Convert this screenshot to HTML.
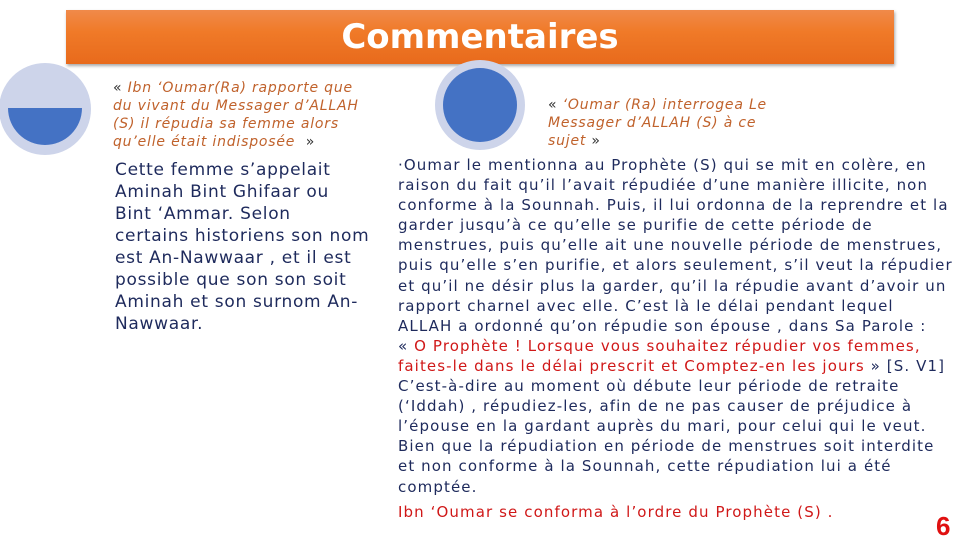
<!DOCTYPE html>
<html><head><meta charset="utf-8"><style>
body{margin:0;width:960px;height:540px;background:#fff;position:relative;overflow:hidden;font-family:"DejaVu Sans","Liberation Sans",sans-serif;}
.ban{position:absolute;left:66px;top:10px;width:828px;height:54px;background:linear-gradient(#f08a4a,#f07a28 40%,#e86a1c);box-shadow:1px 2px 3px rgba(0,0,0,.35);}
.ban div{position:absolute;left:0;right:0;top:7px;text-align:center;color:#fff;font:bold 34px "DejaVu Sans",sans-serif;}
.q{position:absolute;color:#c0622c;font-style:italic;font-size:14px;letter-spacing:0.8px;line-height:18px;white-space:nowrap}
.q b{font-style:normal;color:#333;font-weight:normal}
.t{position:absolute;color:#1e2a5c;white-space:nowrap}
.r{color:#d01818}
</style></head><body>
<div class="ban"><div>Commentaires</div></div>
<svg style="position:absolute;left:0;top:0" width="960" height="200">
<circle cx="45" cy="109" r="46" fill="#cdd4ea"/>
<path d="M8 108 A37 37 0 0 0 82 108 Z" fill="#4472c4"/>
<circle cx="480" cy="105" r="45" fill="#cdd4ea"/>
<circle cx="480" cy="105" r="37" fill="#4472c4"/>
</svg>
<div class="q" style="left:113px;top:79px"><b>«</b> Ibn ‘Oumar(Ra) rapporte que<br>du vivant du Messager d’ALLAH<br>(S) il répudia sa femme alors<br>qu’elle était indisposée &nbsp;<b>»</b></div>
<div class="q" style="left:548px;top:96px"><b>«</b> ‘Oumar (Ra) interrogea Le<br>Messager d’ALLAH (S) à ce<br>sujet <b>»</b></div>
<div class="t" style="left:115px;top:159px;font-size:17px;letter-spacing:0.7px;line-height:22px">Cette femme s’appelait<br>Aminah Bint Ghifaar ou<br>Bint ‘Ammar. Selon<br>certains historiens son nom<br>est An-Nawwaar , et il est<br>possible que son son soit<br>Aminah et son surnom An-<br>Nawwaar.</div>
<div class="t" style="left:398px;top:155px;font-size:15px;letter-spacing:1.1px;line-height:20.1px">·Oumar le mentionna au Prophète (S) qui se mit en colère, en<br>raison du fait qu’il l’avait répudiée d’une manière illicite, non<br>conforme à la Sounnah. Puis, il lui ordonna de la reprendre et la<br>garder jusqu’à ce qu’elle se purifie de cette période de<br>menstrues, puis qu’elle ait une nouvelle période de menstrues,<br>puis qu’elle s’en purifie, et alors seulement, s’il veut la répudier<br>et qu’il ne désir plus la garder, qu’il la répudie avant d’avoir un<br>rapport charnel avec elle. C’est là le délai pendant lequel<br>ALLAH a ordonné qu’on répudie son épouse , dans Sa Parole :<br>« <span class="r">O Prophète ! Lorsque vous souhaitez répudier vos femmes,</span><br><span class="r">faites-le dans le délai prescrit et Comptez-en les jours</span> » [S. V1]<br>C’est-à-dire au moment où débute leur période de retraite<br>(‘Iddah) , répudiez-les, afin de ne pas causer de préjudice à<br>l’épouse en la gardant auprès du mari, pour celui qui le veut.<br>Bien que la répudiation en période de menstrues soit interdite<br>et non conforme à la Sounnah, cette répudiation lui a été<br>comptée.</div>
<div class="t r" style="left:398px;top:503px;font-size:15px;letter-spacing:1.1px">Ibn ‘Oumar se conforma à l’ordre du Prophète (S) .</div>
<div style="position:absolute;left:936px;top:511px;color:#e01010;font:bold 26px 'Liberation Sans',sans-serif">6</div>
</body></html>
